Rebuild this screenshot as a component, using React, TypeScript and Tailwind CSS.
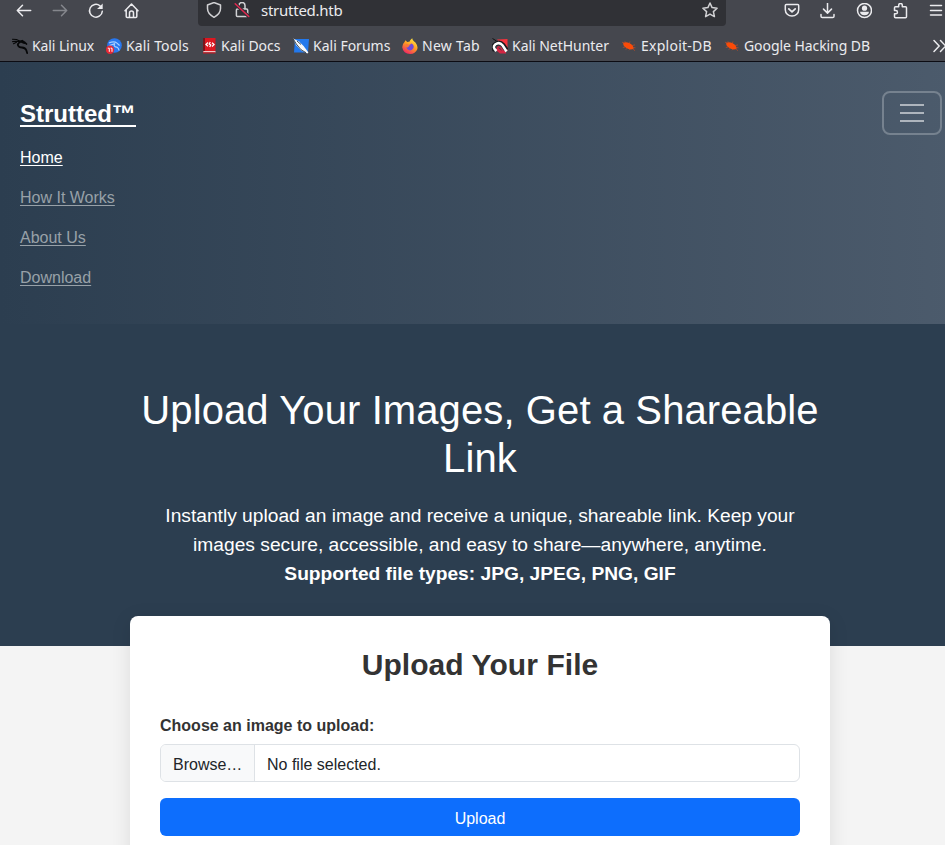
import React from 'react';

type IconProps = { className?: string };

const strokeProps = {
  fill: 'none',
  stroke: 'currentColor',
  strokeWidth: 1.5,
  strokeLinecap: 'round' as const,
  strokeLinejoin: 'round' as const,
};

function BackIcon({ className }: IconProps) {
  return (
    <svg viewBox="0 0 16 16" className={className} {...strokeProps}>
      <path d="M14.700 7.500H1.300M6.500 2.300 1.300 7.500l5.200 5.200" />
    </svg>
  );
}

function ForwardIcon({ className }: IconProps) {
  return (
    <svg viewBox="0 0 16 16" className={className} {...strokeProps}>
      <path d="M1.300 7.500h13.400M9.500 2.300l5.200 5.200-5.200 5.200" />
    </svg>
  );
}

function ReloadIcon({ className }: IconProps) {
  return (
    <svg viewBox="0 0 16 16" className={className} {...strokeProps}>
      <path d="M12 2.800A6.400 6.400 0 1 0 14.300 8.200" />
      <path d="M14.700.400v5.600H9.100z" fill="currentColor" stroke="none" />
    </svg>
  );
}

function HomeIcon({ className }: IconProps) {
  return (
    <svg viewBox="0 0 16 16" className={className} {...strokeProps}>
      <path d="M1 7.700 7.500 1 14 7.700M2.200 6.800v6.700q0 1 1 1h8.600q1 0 1-1V6.800M5.500 14.500V10a2 2 0 0 1 4 0v4.500" />
    </svg>
  );
}

function ShieldIcon({ className }: IconProps) {
  return (
    <svg viewBox="0 0 16 16" className={className} {...strokeProps}>
      <path d="M8 .500 14.500 3v3.600q0 5.400-6.500 8.700Q1.500 12 1.500 6.600V3z" />
    </svg>
  );
}

function InsecureLockIcon({ className }: IconProps) {
  return (
    <svg viewBox="0 0 16 16" className={className} {...strokeProps}>
      <path d="M5 7V3.500a3 3 0 0 1 6 0V7M4 7h8.500q1.200 0 1.200 1.200v5.300q0 1-1 1H3.400q-1 0-1-1V8q0-1 1-1z" />
      <path d="m1.200 1.800 13.600 12.700" stroke="#303136" strokeWidth="3.500" />
      <path d="m1.200 1.800 13.600 12.700" stroke="#e22850" />
    </svg>
  );
}

function StarIcon({ className }: IconProps) {
  return (
    <svg viewBox="0 0 16 16" className={className} {...strokeProps}>
      <path d="m8 1 2.100 4.600 5 .600-3.700 3.400 1 5L8 12.100l-4.400 2.500 1-5L.900 6.200l5-.600z" />
    </svg>
  );
}

function PocketIcon({ className }: IconProps) {
  return (
    <svg viewBox="0 0 16 16" className={className} {...strokeProps}>
      <path d="M2.300 1.500h11.400q1 0 1 1v4.200a6.700 6.400 0 0 1-13.400 0V2.500q0-1 1-1z" />
      <path d="M4.800 5.900 8 8.800l3.200-2.900" strokeWidth="1.800" />
    </svg>
  );
}

function DownloadIcon({ className }: IconProps) {
  return (
    <svg viewBox="0 0 16 16" className={className} {...strokeProps}>
      <path d="M7.500 0v10M3.500 6.100l4 4 4-4M1 11.500v1.700q0 1.300 1.300 1.300h10.400q1.300 0 1.300-1.300v-1.700" />
    </svg>
  );
}

function AccountIcon({ className }: IconProps) {
  return (
    <svg viewBox="0 0 16 16" className={className} {...strokeProps}>
      <circle cx="8.500" cy="7.500" r="7" />
      <circle cx="8.500" cy="5.200" r="2.600" fill="currentColor" stroke="none" />
      <path d="M4.100 8.700h8.800q0 3.400-4.400 3.600-4.400-.200-4.400-3.600z" fill="currentColor" stroke="none" />
    </svg>
  );
}

function ExtensionIcon({ className }: IconProps) {
  return (
    <svg viewBox="0 0 16 16" className={className} {...strokeProps}>
      <path d="M2.500 4.800q0-1 1-1h3.200V2.300a1.800 1.800 0 0 1 3.600 0v1.500h3.200q1 0 1 1v8.900q0 1-1 1h-10q-1 0-1-1v-2.900h1.300a1.600 1.600 0 0 0 0-3.300H2.500z" />
    </svg>
  );
}

function MenuIcon({ className }: IconProps) {
  return (
    <svg viewBox="0 0 16 16" className={className} {...strokeProps}>
      <path d="M2.500 2.500h11M2.500 7.500h11M2.500 12h11" />
    </svg>
  );
}

function KaliDragonIcon({ className }: IconProps) {
  return (
    <svg viewBox="0 0 16 16" className={className} fill="none" stroke="#060708" strokeLinecap="round" strokeLinejoin="round">
      <path d="M.500 1.200 4.500 1.500l3 1.500M.600 3.600 4 3.200l3.500.500M1.500 5.800l3-1.500" strokeWidth="1.100" />
      <path d="M8 4.200Q5.200 5.500 6 7.500T10 9.500q3.400.300 4.300 2.700l.900 2.900" strokeWidth="1.800" />
      <path d="m7 3.500 3.200-.900 2.300 1.500 2.100 2M9.500 4l3 1.300" strokeWidth="1.500" />
    </svg>
  );
}

function KaliToolsIcon({ className }: IconProps) {
  return (
    <svg viewBox="0 0 16 16" className={className}>
      <circle cx="8.500" cy="7.500" r="7.300" fill="#2878f0" />
      <path d="M3 5q5-2.500 8 .100l2.600 2.400M3.500 7.500 9 5.600q-2 2 .500 3.300 3 .200 3.500 3.600" fill="none" stroke="#a9d0ff" strokeWidth="1.200" />
      <circle cx="4" cy="11.800" r="4.200" fill="#e62835" />
      <path d="M1.800 10.200h1.500v3.600M4.600 10.200H6v3.600" fill="none" stroke="#fff" strokeWidth="1" />
    </svg>
  );
}

function KaliDocsIcon({ className }: IconProps) {
  return (
    <svg viewBox="0 0 16 16" className={className}>
      <path d="M2 0h2.500v13L2 15z" fill="#79151b" />
      <path d="M4 0h10.500v13H4z" fill="#dd1720" />
      <path d="M2.500 13h12v1.500H2z" fill="#f1c8c8" />
      <path d="M2 14.300h12.500v1.200H2z" fill="#c71820" />
      <path d="M7 4.500 5 6.500l2 1.800M11 4.700l2 1.900-2 1.900M9.300 4 8.200 6l1.500 1-1 2" fill="none" stroke="#fff" strokeWidth="1.300" />
    </svg>
  );
}

function KaliForumsIcon({ className }: IconProps) {
  return (
    <svg viewBox="0 0 16 16" className={className}>
      <path d="M2 1h14l-1 13.500H1z" fill="#2379ed" />
      <path d="m0 .500 6 3L10.600 8l4.800 6.500-1 1-5.900-2.800L3 7z" fill="#f7f8fa" />
      <path d="m.300 1 3 5 4.700 5.700 5 3M4 3l4 3.500" fill="none" stroke="#17232f" strokeWidth=".8" />
    </svg>
  );
}

function FirefoxIcon({ className }: IconProps) {
  return (
    <svg viewBox="0 0 16 16" className={className}>
      <defs>
        <linearGradient id="firefox-flame" x1=".8" y1="0" x2=".25" y2="1">
          <stop offset="0" stopColor="#fff044" />
          <stop offset=".48" stopColor="#ff9b23" />
          <stop offset="1" stopColor="#f02067" />
        </linearGradient>
      </defs>
      <path d="M3.500 2.200 5.200 4q1.300-.500 2.200-.300Q8 1.700 10.200.200q.200 2.300 2.200 3.500 1 .500 1.300 1.300Q16.200 8 15.300 11.200 13.300 15.900 8.200 15.900q-7-.500-7.900-6.500Q.200 6 2.500 4z" fill="url(#firefox-flame)" />
      <path d="M4 6.800 7 7q1.500-.300 2.200-1.600 2.800 1 2.500 3.900-.800 3.100-4 3.100-3.500-.500-3.700-5.600z" fill="#7049da" />
      <path d="M3.500 6.600 6 6.300l1.600 1q-.300 1.400-2 1.700l-.200 1.100Q3.700 9.300 3.500 6.600z" fill="#ff7735" />
    </svg>
  );
}

function NetHunterIcon({ className }: IconProps) {
  return (
    <svg viewBox="0 0 16 16" className={className}>
      <path d="M5 1.500 15.500 1v12z" fill="#f5333d" />
      <path d="m.500.500 4 2.500" stroke="#111" strokeWidth="1" />
      <path d="M3 12.500Q0 8.500 3 6.500q4.500-3.500 8 .500l3.500 5" fill="none" stroke="#171a1e" strokeWidth="4.500" />
      <path d="m4.500 10.500 4 3.500h5.500" fill="none" stroke="#d42643" strokeWidth="3" />
      <path d="M4.500 13Q0 9.200 3.200 6.500q4.300-3 7.300.800l4 6.200" fill="none" stroke="#fff" strokeWidth="2.500" />
      <path d="M5.800 10.500q-.300-2 1.500-1.600 1.500.400 3.700 4" fill="none" stroke="#d42643" strokeWidth="1.500" />
    </svg>
  );
}

function ExploitDbIcon({ className }: IconProps) {
  return (
    <svg viewBox="0 0 16 16" className={className}>
      <path d="M2.200 5Q4.500 3.400 8.300 5q4.500 2 4.200 6-4.200 1.300-7.500-1.300-3-1.700-2.800-4.700z" fill="#fa4b08" />
      <path d="M1 4.200 3.300 5M5 4.500l-1.400-1M8.500 5 9 3.500M11 7.500l3-.600M12 9.500l2.500.300M4 9l-2.200.500M6 10.500l-1.400 1M9 11l-1 1.200M12 10.500l1.700 2.300" fill="none" stroke="#c04c27" strokeWidth=".7" />
    </svg>
  );
}

function OverflowIcon({ className }: IconProps) {
  return (
    <svg viewBox="0 0 16 16" className={className} {...strokeProps}>
      <path d="m2 2.500 5.200 5.500L2 13.500M8.500 2.500 13.700 8l-5.200 5.500" />
    </svg>
  );
}

const bookmarks = [
  { label: 'Kali Linux', Icon: KaliDragonIcon, box: 'w-[94px]', tracking: 'tracking-[-0.1px]' },
  { label: 'Kali Tools', Icon: KaliToolsIcon, box: 'w-[95px]', tracking: 'tracking-[0.15px]' },
  { label: 'Kali Docs', Icon: KaliDocsIcon, box: 'w-[92px]', tracking: 'tracking-[0px]' },
  { label: 'Kali Forums', Icon: KaliForumsIcon, box: 'w-[109px]', tracking: 'tracking-[0px]' },
  { label: 'New Tab', Icon: FirefoxIcon, box: 'w-[90px]', tracking: 'tracking-[0.28px]' },
  { label: 'Kali NetHunter', Icon: NetHunterIcon, box: 'w-[129px]', tracking: 'tracking-[-0.03px]' },
  { label: 'Exploit-DB', Icon: ExploitDbIcon, box: 'w-[103px]', tracking: 'tracking-[0.25px]' },
  { label: 'Google Hacking DB', Icon: ExploitDbIcon, box: 'w-[150px]', tracking: 'tracking-[-0.07px]' },
];

function BrowserChrome() {
  return (
    <header className="h-[62px] w-[945px] overflow-hidden border-b border-[#0c0c13] bg-[#45474e] font-['Noto_Sans',sans-serif] text-[#ebebee]">
      <div className="flex h-[26px] pl-4">
        <div className="flex h-[21px] w-[182px] items-center gap-5">
          <BackIcon className="size-4" />
          <ForwardIcon className="size-4 text-[#85878d]" />
          <ReloadIcon className="size-4" />
          <HomeIcon className="size-4" />
        </div>
        <div className="flex h-[26px] w-[528px] rounded-b bg-[#303136] pr-2 pb-[6px] pl-2">
          <div className="flex flex-1 items-center">
            <ShieldIcon className="size-4 text-[#d1d1d4]" />
            <InsecureLockIcon className="ml-3 size-4 text-[#d1d1d4]" />
            <span className="ml-[11px] text-[15px] leading-5 tracking-[-0.25px]">strutted.htb</span>
          </div>
          <StarIcon className="mt-[2px] size-4 text-[#d1d1d4]" />
        </div>
        <div className="ml-[58px] flex h-[21px] shrink-0 items-center gap-5">
          <PocketIcon className="size-4" />
          <DownloadIcon className="size-4" />
          <AccountIcon className="size-4" />
          <ExtensionIcon className="size-4" />
          <MenuIcon className="size-4" />
        </div>
      </div>
      <nav className="flex h-[35px] items-center pt-1 pl-3">
        {bookmarks.map(({ label, Icon, box, tracking }) => (
          <a key={label} className={'flex shrink-0 items-center gap-1 text-[14px] leading-5 whitespace-nowrap ' + box + ' ' + tracking}>
            <Icon className="size-4 shrink-0" />
            {label}
          </a>
        ))}
        <OverflowIcon className="ml-[58px] size-4 shrink-0" />
      </nav>
    </header>
  );
}

function SiteHeader() {
  return (
    <header className="flex h-[262px] w-[960px] items-start justify-between bg-linear-to-r from-[#2c3e50] to-[#4c5b6c] pt-[29px] pr-[18px] pl-5 text-base leading-6">
      <div>
        <a className="block h-[47px] pt-[5px] text-2xl leading-9 font-bold text-white underline decoration-2 underline-offset-3">Strutted™</a>
        <ul className="flex flex-col gap-4">
          <li className="h-6 pt-2 text-white underline underline-offset-2">Home</li>
          <li className="h-6 pt-2 text-[#98a1a8] underline underline-offset-2">How It Works</li>
          <li className="h-6 pt-2 text-[#98a1a8] underline underline-offset-2">About Us</li>
          <li className="h-6 pt-2 text-[#98a1a8] underline underline-offset-2">Download</li>
        </ul>
      </div>
      <button className="flex h-11 w-[60px] flex-col items-center justify-center gap-[6px] rounded-lg border-2 border-[#76828f]">
        <span className="h-[2px] w-6 bg-[#aeb5bd]" />
        <span className="h-[2px] w-6 bg-[#aeb5bd]" />
        <span className="h-[2px] w-6 bg-[#aeb5bd]" />
      </button>
    </header>
  );
}

export default function App() {
  return (
    <div className="h-[845px] w-[945px] overflow-hidden bg-[#f4f4f4] font-['Liberation_Sans',sans-serif]">
      <BrowserChrome />
      <main className="w-[960px]">
        <SiteHeader />
        <section className="h-[322px] bg-[#2c3e50] pt-[62px] text-center text-white">
          <h1 className="mx-auto w-[700px] text-[40px] leading-12 tracking-[0.1px]">Upload Your Images, Get a Shareable Link</h1>
          <p className="mx-auto mt-5 w-[700px] text-[19.2px] leading-[28.8px]">
            <span className="block">Instantly upload an image and receive a unique, shareable link. Keep your</span>
            <span className="block">images secure, accessible, and easy to share—anywhere, anytime.</span>
            <strong className="block">Supported file types: JPG, JPEG, PNG, GIF</strong>
          </p>
        </section>
        <section className="relative mx-auto -mt-[30px] h-[300px] w-[700px] rounded-lg bg-white px-[30px] pt-[31px] shadow-[0_4px_20px_rgba(0,0,0,0.1)]">
          <h2 className="text-center text-[30px] leading-9 font-bold tracking-[0.07px] text-[#333333]">Upload Your File</h2>
          <label className="mt-[31px] block text-base leading-6 font-bold text-[#333333]">Choose an image to upload:</label>
          <div className="mt-[6px] flex h-[38px] overflow-hidden rounded-md border border-[#dee2e6] text-base leading-9 text-[#212529]">
            <span className="w-[94px] shrink-0 border-r border-[#dee2e6] bg-[#f8f9fa] pt-[2px] pl-3">Browse…</span>
            <span className="pt-[2px] pl-3">No file selected.</span>
          </div>
          <button className="mt-4 block h-[38px] w-full rounded-md bg-[#0d6efd] pt-[3px] text-center text-base text-white">Upload</button>
        </section>
      </main>
    </div>
  );
}
